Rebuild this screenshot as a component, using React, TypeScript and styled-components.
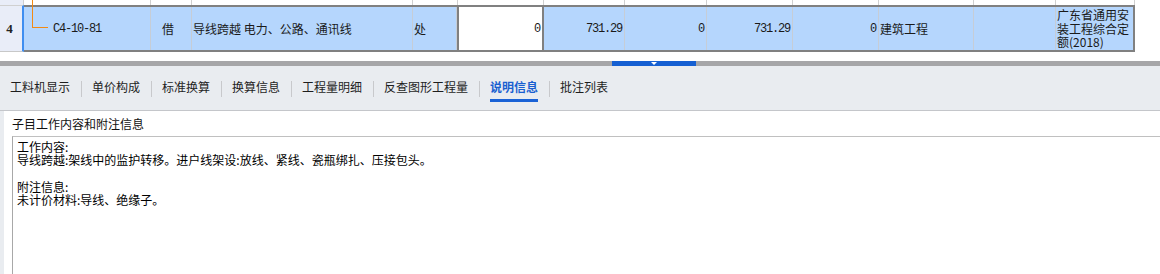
import styled, { createGlobalStyle } from "styled-components";

const GlobalStyle = createGlobalStyle`
  html, body {
    margin: 0;
    padding: 0;
    background: #ffffff;
    overflow: hidden;
  }
  body {
    width: 1160px;
    height: 274px;
    font-family: "Noto Sans CJK SC", "Noto Sans", sans-serif;
    font-size: 12px;
    color: #1e1e1e;
  }
`;

const StyledPage = styled.div`
  display: flex;
  flex-direction: column;
  width: 1160px;
  height: 274px;
`;

const StyledTable = styled.div`
  display: flex;
  flex-direction: column;
  width: 1135px;
`;

const StyledPrevRow = styled.div`
  display: flex;
  height: 5px;
`;

const StyledPrevCell = styled.div<{ $w: number; $tree?: boolean }>`
  position: relative;
  width: ${(p) => p.$w}px;
  flex: none;
  box-sizing: border-box;
  border-right: 1px solid #d0d0d0;

  ${(p) =>
    p.$tree &&
    `
    &::after {
      content: "";
      position: absolute;
      left: 8px;
      top: 0;
      bottom: 0;
      width: 1px;
      background: #f28a14;
    }
  `}
`;

const StyledPrevNumber = styled(StyledPrevCell)`
  background: #e9edf8;
`;

const StyledRow = styled.div`
  display: flex;
  height: 47px;
`;

const StyledRowNumber = styled.div`
  width: 24px;
  flex: none;
  box-sizing: border-box;
  display: flex;
  align-items: center;
  justify-content: center;
  padding-right: 3px;
  background: #e9edf8;
  border-top: 1px solid #d0d0d0;
  border-bottom: 1px solid #c8c8c8;
  border-right: 2px solid #3f8ef0;
  font-family: "Liberation Serif", serif;
  font-weight: bold;
  font-size: 13px;
  color: #222;
`;

const StyledRowBody = styled.div`
  display: flex;
  flex: 1;
  box-sizing: border-box;
  background: #b5d6fd;
  border-top: 2px solid #808080;
  border-bottom: 2px solid #808080;
  border-right: 2px solid #808080;
`;

const StyledCell = styled.div<{ $w: number; $align?: "left" | "right"; $mono?: boolean; $edit?: boolean; $last?: boolean }>`
  position: relative;
  width: ${(p) => p.$w}px;
  flex: none;
  box-sizing: border-box;
  display: flex;
  align-items: center;
  justify-content: ${(p) => (p.$align === "right" ? "flex-end" : "flex-start")};
  padding: ${(p) => (p.$align === "right" ? "0 2px 0 0" : "0 0 0 1px")};
  border-right: ${(p) => (p.$last || p.$edit ? "none" : "1px solid #c6cdd6")};
  font-family: ${(p) =>
    p.$mono ? `"Liberation Mono", monospace` : `"Noto Sans CJK SC", sans-serif`};
  font-size: ${(p) => (p.$mono ? "12px" : "12px")};
  letter-spacing: ${(p) => (p.$mono ? "-1.2px" : "0")};
  color: #1a1a1a;
  white-space: nowrap;

  ${(p) =>
    p.$edit &&
    `
    background: #ffffff;
    border-left: 2px solid #808080;
    border-right: 2px solid #808080;
  `}
`;

const StyledCodeCell = styled(StyledCell)`
  padding-left: 29px;
`;

const StyledTreeV = styled.span`
  position: absolute;
  left: 8px;
  top: -2px;
  width: 1px;
  height: 23px;
  background: #f28a14;
`;

const StyledTreeH = styled.span`
  position: absolute;
  left: 8px;
  top: 20px;
  width: 16px;
  height: 1px;
  background: #f28a14;
`;

const StyledWrapText = styled.div`
  white-space: normal;
  width: 74px;
  line-height: 13.5px;
  font-size: 12px;
  word-break: break-all;
`;

const StyledGap = styled.div`
  height: 9px;
  background: #ffffff;
`;

const StyledSplitter = styled.div`
  position: relative;
  height: 5px;
  background: #a6a6a8;
`;

const StyledSplitterHandle = styled.div`
  position: absolute;
  left: 612px;
  top: 0;
  width: 84px;
  height: 5px;
  background: #1660d2;
  display: flex;
  justify-content: center;
`;

const StyledTriangle = styled.span`
  width: 0;
  height: 0;
  margin-top: 1px;
  border-left: 3px solid transparent;
  border-right: 3px solid transparent;
  border-top: 3px solid #ffffff;
`;

const StyledTabBar = styled.div`
  display: flex;
  align-items: flex-start;
  height: 45px;
  box-sizing: border-box;
  padding: 13px 0 0 10px;
  background: #e9ecf0;
  border-bottom: 1px solid #c4c6ca;
`;

const StyledTab = styled.div<{ $active?: boolean }>`
  display: flex;
  flex-direction: column;
  align-items: stretch;
  font-size: 12px;
  line-height: 16px;
  color: ${(p) => (p.$active ? "#1a5fd0" : "#1e1e1e")};
  font-weight: ${(p) => (p.$active ? 600 : 400)};
  white-space: nowrap;

  &::after {
    content: "";
    height: 3px;
    margin-top: 4px;
    background: ${(p) => (p.$active ? "#1a62d6" : "transparent")};
  }
`;

const StyledTabSep = styled.span`
  width: 1px;
  height: 16px;
  margin: 2px 10px 0 11px;
  background: #c8c9cc;
`;

const StyledPanel = styled.div`
  flex: 1;
  display: flex;
  padding-left: 4px;
  background: #e9ecf0;
  min-height: 0;
`;

const StyledPanelInner = styled.div`
  flex: 1;
  display: flex;
  flex-direction: column;
  background: #ffffff;
  padding-left: 8px;
  min-height: 0;
`;

const StyledPanelTitle = styled.div`
  height: 25px;
  box-sizing: border-box;
  padding-top: 5px;
  line-height: 16px;
  font-size: 12px;
  color: #111;
`;

const StyledNote = styled.div`
  flex: 1;
  box-sizing: border-box;
  padding: 3px 0 0 4px;
  border-top: 1px solid #c0c0c0;
  border-left: 1px solid #a8a8a8;
  font-size: 12px;
  line-height: 13.3px;
  color: #000;
  white-space: pre-line;
`;

const prevCols = [127, 41, 221, 45, 86, 81, 82, 86, 86, 95, 82, 79];

const tabs = ["工料机显示", "单价构成", "标准换算", "换算信息", "工程量明细", "反查图形工程量", "说明信息", "批注列表"];

const noteText = `工作内容:
导线跨越:架线中的监护转移。进户线架设:放线、紧线、瓷瓶绑扎、压接包头。

附注信息:
未计价材料:导线、绝缘子。`;

export default function App() {
  return (
    <StyledPage>
      <GlobalStyle />
      <StyledTable>
        <StyledPrevRow>
          <StyledPrevNumber $w={24} />
          {prevCols.map((w, i) => (
            <StyledPrevCell key={i} $w={w} $tree={i === 0} />
          ))}
        </StyledPrevRow>
        <StyledRow>
          <StyledRowNumber>4</StyledRowNumber>
          <StyledRowBody>
            <StyledCodeCell $w={127} $mono>
              <StyledTreeV />
              <StyledTreeH />
              C4-10-81
            </StyledCodeCell>
            <StyledCell $w={41} style={{ paddingLeft: 11 }}>借</StyledCell>
            <StyledCell $w={221}>导线跨越 电力、公路、通讯线</StyledCell>
            <StyledCell $w={44}>处</StyledCell>
            <StyledCell $w={87} $align="right" $mono $edit>0</StyledCell>
            <StyledCell $w={81} $align="right" $mono>731.29</StyledCell>
            <StyledCell $w={82} $align="right" $mono>0</StyledCell>
            <StyledCell $w={86} $align="right" $mono>731.29</StyledCell>
            <StyledCell $w={86} $align="right" $mono>0</StyledCell>
            <StyledCell $w={95}>建筑工程</StyledCell>
            <StyledCell $w={82} />
            <StyledCell $w={77} $last>
              <StyledWrapText>广东省通用安装工程综合定额(2018)</StyledWrapText>
            </StyledCell>
          </StyledRowBody>
        </StyledRow>
      </StyledTable>
      <StyledGap />
      <StyledSplitter>
        <StyledSplitterHandle>
          <StyledTriangle />
        </StyledSplitterHandle>
      </StyledSplitter>
      <StyledTabBar>
        {tabs.map((t, i) => (
          <div key={t} style={{ display: "contents" }}>
            {i > 0 && <StyledTabSep />}
            <StyledTab $active={t === "说明信息"}>{t}</StyledTab>
          </div>
        ))}
      </StyledTabBar>
      <StyledPanel>
        <StyledPanelInner>
          <StyledPanelTitle>子目工作内容和附注信息</StyledPanelTitle>
          <StyledNote>{noteText}</StyledNote>
        </StyledPanelInner>
      </StyledPanel>
    </StyledPage>
  );
}
